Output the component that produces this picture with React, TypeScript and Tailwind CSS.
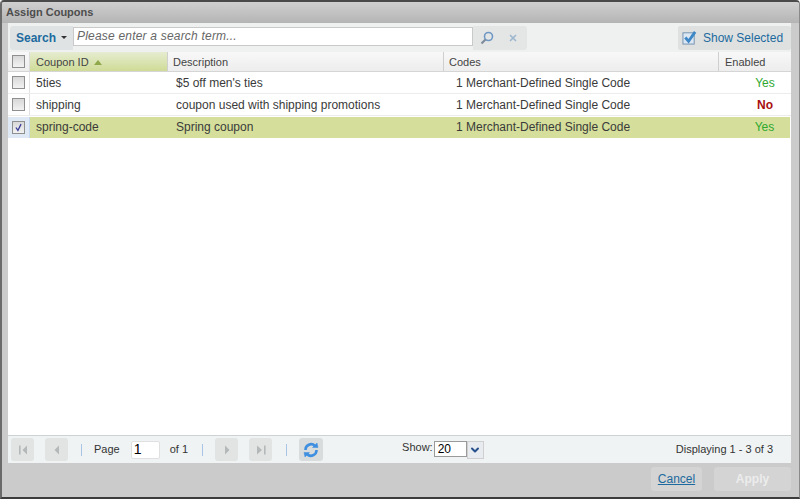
import { ChevronDown, X } from 'lucide-react';

const rows = [
  { id: '5ties', description: "$5 off men's ties", codes: '1 Merchant-Defined Single Code', enabled: true, selected: false },
  { id: 'shipping', description: 'coupon used with shipping promotions', codes: '1 Merchant-Defined Single Code', enabled: false, selected: false },
  { id: 'spring-code', description: 'Spring coupon', codes: '1 Merchant-Defined Single Code', enabled: true, selected: true },
];

function GridCheckbox({ checked = false }: { checked?: boolean }) {
  return (
    <span className="flex h-[13px] w-[13px] items-center justify-center border border-[#8f8f8f] bg-gradient-to-b from-[#d8d8d8] to-[#f2f2f2]">
      {checked && (
        <svg viewBox="0 0 13 13" className="h-[13px] w-[13px]">
          <path d="M3.5 6.5 L5.8 10 L9.5 2.5" fill="none" stroke="#3b3f9c" strokeWidth="1.6" />
        </svg>
      )}
    </span>
  );
}

function PagerButton({ kind }: { kind: 'first' | 'prev' | 'next' | 'last' }) {
  return (
    <span className="flex h-[23px] w-[23px] items-center justify-center rounded-[3px] bg-[#e2e4e4]">
      <svg viewBox="0 0 14 14" className="h-[14px] w-[14px]" fill="#b4b8b8">
        {kind === 'first' && <path d="M3 2.5h1.6v9H3z M11 2.5 L6.5 7 L11 11.5z" />}
        {kind === 'prev' && <path d="M9 2.5 L4.5 7 L9 11.5z" />}
        {kind === 'next' && <path d="M5 2.5 L9.5 7 L5 11.5z" />}
        {kind === 'last' && <path d="M3 2.5 L8 7 L3 11.5z M10 2.5h1.6v9H10z" />}
      </svg>
    </span>
  );
}

function Divider() {
  return <span className="h-3 w-px bg-[#a9c4e4]" />;
}

export default function App() {
  return (
    <div className="flex h-[499px] w-[800px] flex-col overflow-hidden rounded-t-[4px] border-t-2 border-b-2 border-l-2 border-r border-t-[#4a4a4a] border-b-[#3c3c3c] border-l-[#6a6a6a] border-r-[#8a8a8a] bg-[#cbcbcb] font-['Liberation_Sans',Arial,sans-serif] text-[12px] text-[#333]">
      {/* title */}
      <div className="flex h-[21px] shrink-0 items-center bg-gradient-to-b from-[#d0d0d0] to-[#b4b4b4] pl-[4px] text-[11px] font-bold text-[#4d4d4d]">
        Assign Coupons
      </div>

      <div className="ml-[6px] mr-[8px] flex min-h-0 flex-1 flex-col">
        {/* search toolbar */}
        <div className="flex h-[29px] shrink-0 items-center justify-between bg-[#eff1f1] pl-[2px]">
          <div className="flex items-center">
            <div className="flex h-[24px] w-[63px] items-center justify-center gap-[5px] rounded-l-[3px] bg-[#e0e3e3] text-[12px] font-bold text-[#1c6a9e]">
              Search
              <span className="h-0 w-0 border-x-[3px] border-t-[3px] border-x-transparent border-t-[#333]" />
            </div>
            <div className="mb-[3px] flex h-[19px] w-[400px] items-center border border-[#c9c9c9] bg-white pl-[3px] text-[12px] italic tracking-[0.2px] text-[#666]">
              Please enter a search term...
            </div>
            <div className="flex h-[24px] w-[54px] items-center justify-center gap-[14px] rounded-r-[3px] bg-[#e4e6e6] pr-[3px]">
              <svg viewBox="0 0 14 14" className="h-[14px] w-[14px]" fill="none">
                <circle cx="8.5" cy="5.5" r="4" stroke="#6f97c4" strokeWidth="1.6" />
                <path d="M5.5 8.5 L1.5 12.5" stroke="#7d8c9c" strokeWidth="2.2" />
              </svg>
              <X className="h-[10px] w-[10px] text-[#9db7cf]" strokeWidth={4} />
            </div>
          </div>
          <div className="flex h-[24px] w-[113px] items-center gap-[6px] rounded-[2px] bg-[#dfe1e1] pl-[4px] text-[12px] text-[#1c6a9e]">
            <svg viewBox="0 0 16 16" className="h-[15px] w-[15px]">
              <rect x="1" y="3" width="12" height="12" fill="#dbe7f3" stroke="#6f8fae" />
              <path d="M3.5 8 L7 12 L14 2" fill="none" stroke="#3d87c6" strokeWidth="3" />
            </svg>
            Show Selected
          </div>
        </div>

        {/* grid */}
        <div className="flex min-h-0 flex-1 flex-col bg-white">
          <div className="flex h-[20px] shrink-0 items-center border-b border-[#d5d5d5] bg-gradient-to-b from-[#f8f8f8] to-[#ededed] text-[11px] text-[#444]">
            <div className="flex h-full w-[22px] items-center justify-center border-r border-[#dcdcdc]">
              <GridCheckbox />
            </div>
            <div className="flex h-full w-[137px] items-center gap-[5px] bg-gradient-to-b from-[#e6ecd0] to-[#cfdb96] pl-[6px] pt-px">
              Coupon ID
              <span className="h-0 w-0 border-x-[4px] border-b-[5px] border-x-transparent border-b-[#8fa84a]" />
            </div>
            <div className="flex h-full w-[276px] items-center border-l border-[#cfcfcf] pl-[5px] pt-px">Description</div>
            <div className="flex h-full w-[275px] items-center border-l border-[#cfcfcf] pl-[5px] pt-px">Codes</div>
            <div className="flex h-full flex-1 items-center border-l border-[#cfcfcf] pl-[6px] pt-px">Enabled</div>
          </div>

          {rows.map((row) => (
            <div
              key={row.id}
              className={`flex h-[22px] shrink-0 items-center text-[12px] text-[#3a3a3a] ${
                row.selected ? 'border-t border-transparent' : 'border-b border-[#ececec]'
              }`}
            >
              <div className={`flex h-full w-[22px] items-center justify-center border-r ${row.selected ? 'border-[#c3d7ee] bg-[#dfe9f6] pb-px' : 'border-[#e2e2e2]'}`}>
                <GridCheckbox checked={row.selected} />
              </div>
              <div className={`flex h-full flex-1 items-center ${row.selected ? 'mr-px bg-[#d5df9b] pb-px' : ''}`}>
                <span className="w-[140px] pl-[6px]">{row.id}</span>
                <span className="w-[279px] pl-[6px]">{row.description}</span>
                <span className="flex-1 pl-[7px]">{row.codes}</span>
                <span className={`w-[50px] text-center ${row.selected ? 'pr-px' : 'pr-[2px]'} ${row.enabled ? 'text-[#2fa82f]' : 'font-bold text-[#a80f0f]'}`}>
                  {row.enabled ? 'Yes' : 'No'}
                </span>
              </div>
            </div>
          ))}
        </div>

        {/* pager */}
        <div className="flex h-[28px] shrink-0 items-center border-t border-[#cfd2d2] bg-[#eff3f3] pl-[3px] pr-[18px] text-[11px] text-[#333]">
          <PagerButton kind="first" />
          <span className="w-[11px]" />
          <PagerButton kind="prev" />
          <span className="w-[13px]" />
          <Divider />
          <span className="ml-[12px]">Page</span>
          <span className="ml-[11px] flex h-[18px] w-[29px] items-center rounded-[2px] border border-[#e0e0e0] bg-white pl-[2px] text-[14px] text-black">1</span>
          <span className="ml-[10px]">of 1</span>
          <span className="w-[14px]" />
          <Divider />
          <span className="w-[12px]" />
          <PagerButton kind="next" />
          <span className="w-[11px]" />
          <PagerButton kind="last" />
          <span className="w-[14px]" />
          <Divider />
          <span className="w-[12px]" />
          <span className="flex h-[23px] w-6 items-center justify-center rounded-[3px] bg-[#d9dcdc]">
            <svg viewBox="0 0 16 16" className="h-[16px] w-[16px]" fill="none" stroke="#3f8fe0" strokeWidth="2.6">
              <path d="M2.5 8 A5.5 5.5 0 0 1 12 4" />
              <path d="M13.5 8 A5.5 5.5 0 0 1 4 12" />
              <path d="M9.5 5.5 L15 5.5 L14 1z" fill="#3f8fe0" strokeWidth="0.5" />
              <path d="M6.5 10.5 L1 10.5 L2 15z" fill="#3f8fe0" strokeWidth="0.5" />
            </svg>
          </span>
          <span className="ml-[79px] -translate-y-[2px]">Show:</span>
          <span className="ml-px flex h-[18px] w-[50px] items-start self-center">
            <span className="flex h-[16px] w-[33px] items-center border border-[#9a9a9a] bg-white pl-[3px] text-[12px] text-black">20</span>
            <span className="flex h-[18px] w-[17px] items-center justify-center border border-[#cfcfcf] bg-[#e8ecf0]">
              <ChevronDown className="h-[12px] w-[12px] text-[#27508c]" strokeWidth={4} />
            </span>
          </span>
          <span className="ml-auto">Displaying 1 - 3 of 3</span>
        </div>

        {/* actions */}
        <div className="flex h-[34px] shrink-0 items-center justify-end gap-[12px] pb-[2px]">
          <span className="flex h-[24px] w-[51px] items-center justify-center rounded-[3px] bg-[#d4d4d4] text-[12px] text-[#1c6a9e] underline">Cancel</span>
          <span className="flex h-[24px] w-[77px] items-center justify-center rounded-[3px] bg-[#d4d4d4] text-[12px] font-bold text-[#ececec]">Apply</span>
        </div>
      </div>
    </div>
  );
}
